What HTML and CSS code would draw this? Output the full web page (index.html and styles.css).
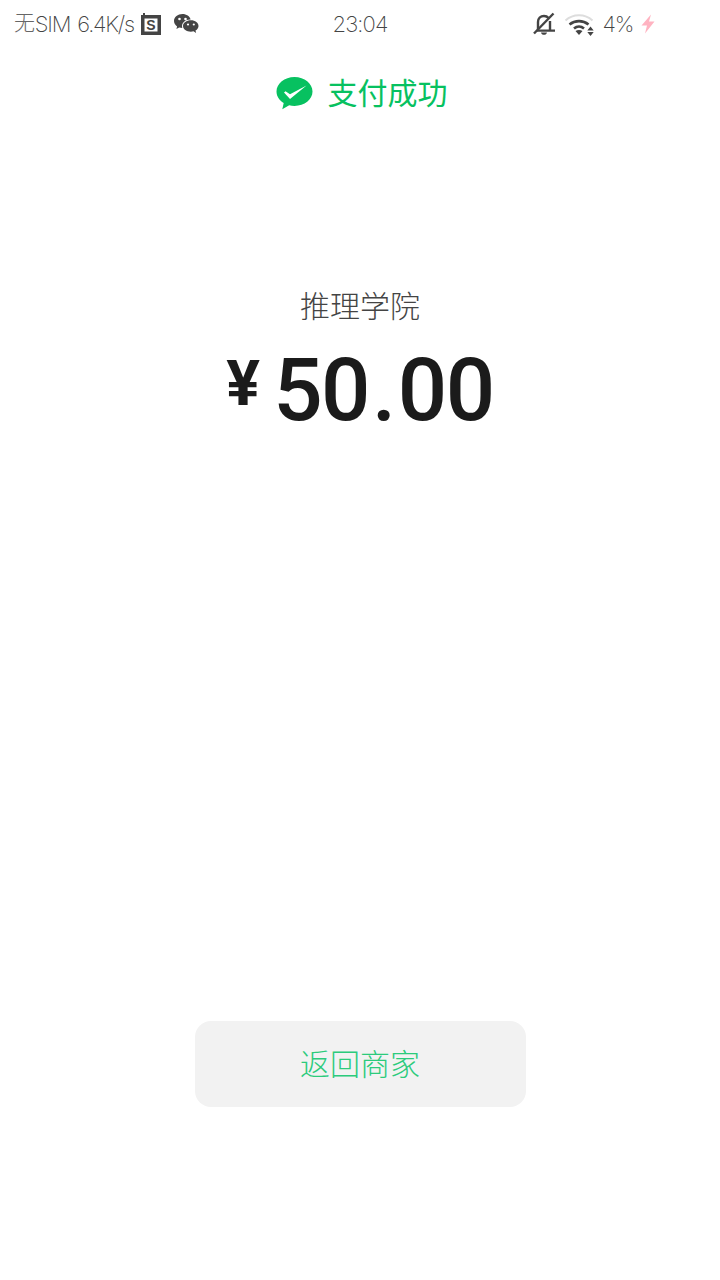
FILE: index.html
```html
<!DOCTYPE html>
<html lang="zh-CN">
<head>
<meta charset="utf-8">
<title>支付成功</title>
<link rel="stylesheet" href="styles.css">
</head>
<body>
<div class="page">
  <header class="status">
    <div class="status-left">
      <span class="st-text"><span class="st-cjk">无</span>SIM</span>
      <span class="st-text speed">6.4K/s</span>
      <svg class="ic-s" width="20" height="22" viewBox="0 0 20 22"><path fill="#444" fill-rule="evenodd" d="M0 2h2V0h2v2h16v20H0zM3.500 5.500v13h13v-13z"/><text x="10" y="17" text-anchor="middle" class="s-letter">S</text></svg>
      <svg class="ic-wx" width="26" height="22" viewBox="0 0 26 22"><path fill="#444" d="M9.500 1C4.800 1 1 4.100 1 8c0 2.200 1.200 4.100 3.100 5.400L3.400 16l2.800-1.500c1 .3 2 .5 3.100.5-.2-.6-.3-1.200-.3-1.900 0-3.700 3.600-6.600 8-6.600h.6C16.800 3.300 13.500 1 9.500 1z"/><path fill="#444" d="M25.500 13c0-3.100-3.200-5.700-7.600-5.700S10 9.900 10 13s3.500 5.700 7.900 5.700c.9 0 1.800-.1 2.600-.4l2.600 1.700-.6-2.400c1.900-1.100 3-2.700 3-4.600z"/><circle cx="6.500" cy="6" r="1.300" fill="#fff"/><circle cx="12.500" cy="6" r="1.300" fill="#fff"/><circle cx="15" cy="11.500" r="1.100" fill="#fff"/><circle cx="20.800" cy="11.500" r="1.100" fill="#fff"/></svg>
    </div>
    <div class="st-text st-time">23:04</div>
    <div class="status-right">
      <svg class="ic-bell" width="24" height="24" viewBox="0 0 24 24"><path fill="none" stroke="#444" stroke-width="2.400" d="M6 18V10c0-3.500 2.500-6 6-6 2 0 3.500.8 4.600 2M18 9v9"/><path fill="#444" d="M5 17.500h18v2.200H5zM9 20.500h6c-.3 1.400-1.500 2.300-3 2.300s-2.700-.9-3-2.300z"/><path stroke="#444" stroke-width="2.400" d="M2 21.500L21.500 1.500"/></svg>
      <svg class="ic-wifi" width="32" height="24" viewBox="0 0 32 24"><path fill="none" stroke="#ddd" stroke-width="2" d="M1.500 8.500C9 1.500 21 1.500 28.500 8.500"/><path fill="none" stroke="#444" stroke-width="2.600" d="M5.500 12.500C11 8 19 8 24.500 12.500"/><path fill="none" stroke="#444" stroke-width="2.600" d="M10 16.500C13 14 17 14 20 16.500"/><path fill="#444" d="M11.500 19c2-1.500 5-1.500 7 0L15 23zM26.500 14.500l3.200 4h-6.400zM23.300 20h6.400l-3.200 4z"/></svg>
      <span class="st-text pct">4%</span>
      <svg class="ic-bolt" width="14" height="20" viewBox="0 0 14 20"><path fill="#ffb3c1" d="M10 .5L.5 11.500H6L4 19.500 13.500 7.500H8z"/></svg>
    </div>
  </header>

  <div class="result">
    <svg class="ic-logo" width="37" height="34" viewBox="0 0 37 34"><path fill="#07c160" d="M18.500 1C8.500 1 .5 7.600.5 15.500c0 4.800 2.800 9 7.200 11.600L6.300 33.200l6.900-3.900c1.700.4 3.400.6 5.300.6 10 0 18-6.500 18-14.400S28.500 1 18.500 1z"/><path fill="#fff" d="M8 16.500l1.500-1.300 4.500 3L30.500 9.500 14 23z"/></svg>
    <span class="result-text">支付成功</span>
  </div>

  <main class="pay">
    <div class="merchant">推理学院</div>
    <div class="amount"><span class="yen">¥</span><span class="num">50<span class="dot">.</span>00</span></div>
  </main>

  <div class="action"><button class="back" type="button"><span class="back-label">返回商家</span></button></div>
</div>
</body>
</html>
```
FILE: styles.css
```css
* { box-sizing: border-box; }
html, body { margin: 0; padding: 0; background: #fff; }
body { font-family: "Noto Sans CJK SC", "Noto Sans", sans-serif; }
.page { width: 720px; height: 1280px; display: flex; flex-direction: column; overflow: hidden; }
.status { height: 48px; display: grid; grid-template-columns: 1fr auto 1fr; align-items: center; }
.status-left { display: flex; align-items: center; padding-left: 14px; }
.status-right { display: flex; align-items: center; padding-left: 145px; }
.st-text { font-family: "Inter", "Noto Sans CJK SC", sans-serif; font-weight: 200; font-size: 22px; line-height: 28px; color: #444; letter-spacing: -1.2px; white-space: nowrap; }
.st-cjk { color: #666; vertical-align: 2px; font-size: 21px; line-height: 1; margin-right: 1px; }
.st-time { letter-spacing: -.9px; }
.speed { margin-left: 7px; }
.ic-s { margin-left: 7px; }
.ic-wx { margin-left: 12px; }
.s-letter { font: 700 14px "Liberation Sans", sans-serif; fill: #444; }
.ic-wifi { margin-left: 8px; }
.pct { margin-left: 6px; }
.ic-bolt { margin-left: 8px; }
.result { height: 90px; display: flex; align-items: center; justify-content: center; gap: 15px; padding-left: 3px; }
.result-text { font-size: 30px; font-weight: 400; color: #07c160; line-height: 1; margin-top: -4px; }
.ic-logo { margin-top: -1px; }
.pay { margin-top: 146px; display: flex; flex-direction: column; align-items: center; }
.merchant { font-size: 30px; font-weight: 300; line-height: 40px; color: #444; }
.amount { margin-top: 16px; display: flex; align-items: center; color: #1b1b1b; line-height: 100px; }
.yen { font: 700 63px "Roboto", sans-serif; margin-right: 13px; margin-top: -13px; }
.num { font: 500 87px "Roboto", sans-serif; letter-spacing: -1.5px; line-height: 100px; }
.dot { margin: 0 3px; }
.action { margin-top: auto; margin-bottom: 173px; display: flex; justify-content: center; }
.back { width: 331px; height: 86px; border: 0; border-radius: 16px; background: #f2f2f2; padding: 0 0 4px; }
.back-label { color: #2ccb7c; font: 300 30px "Noto Sans CJK SC", sans-serif; }
```
